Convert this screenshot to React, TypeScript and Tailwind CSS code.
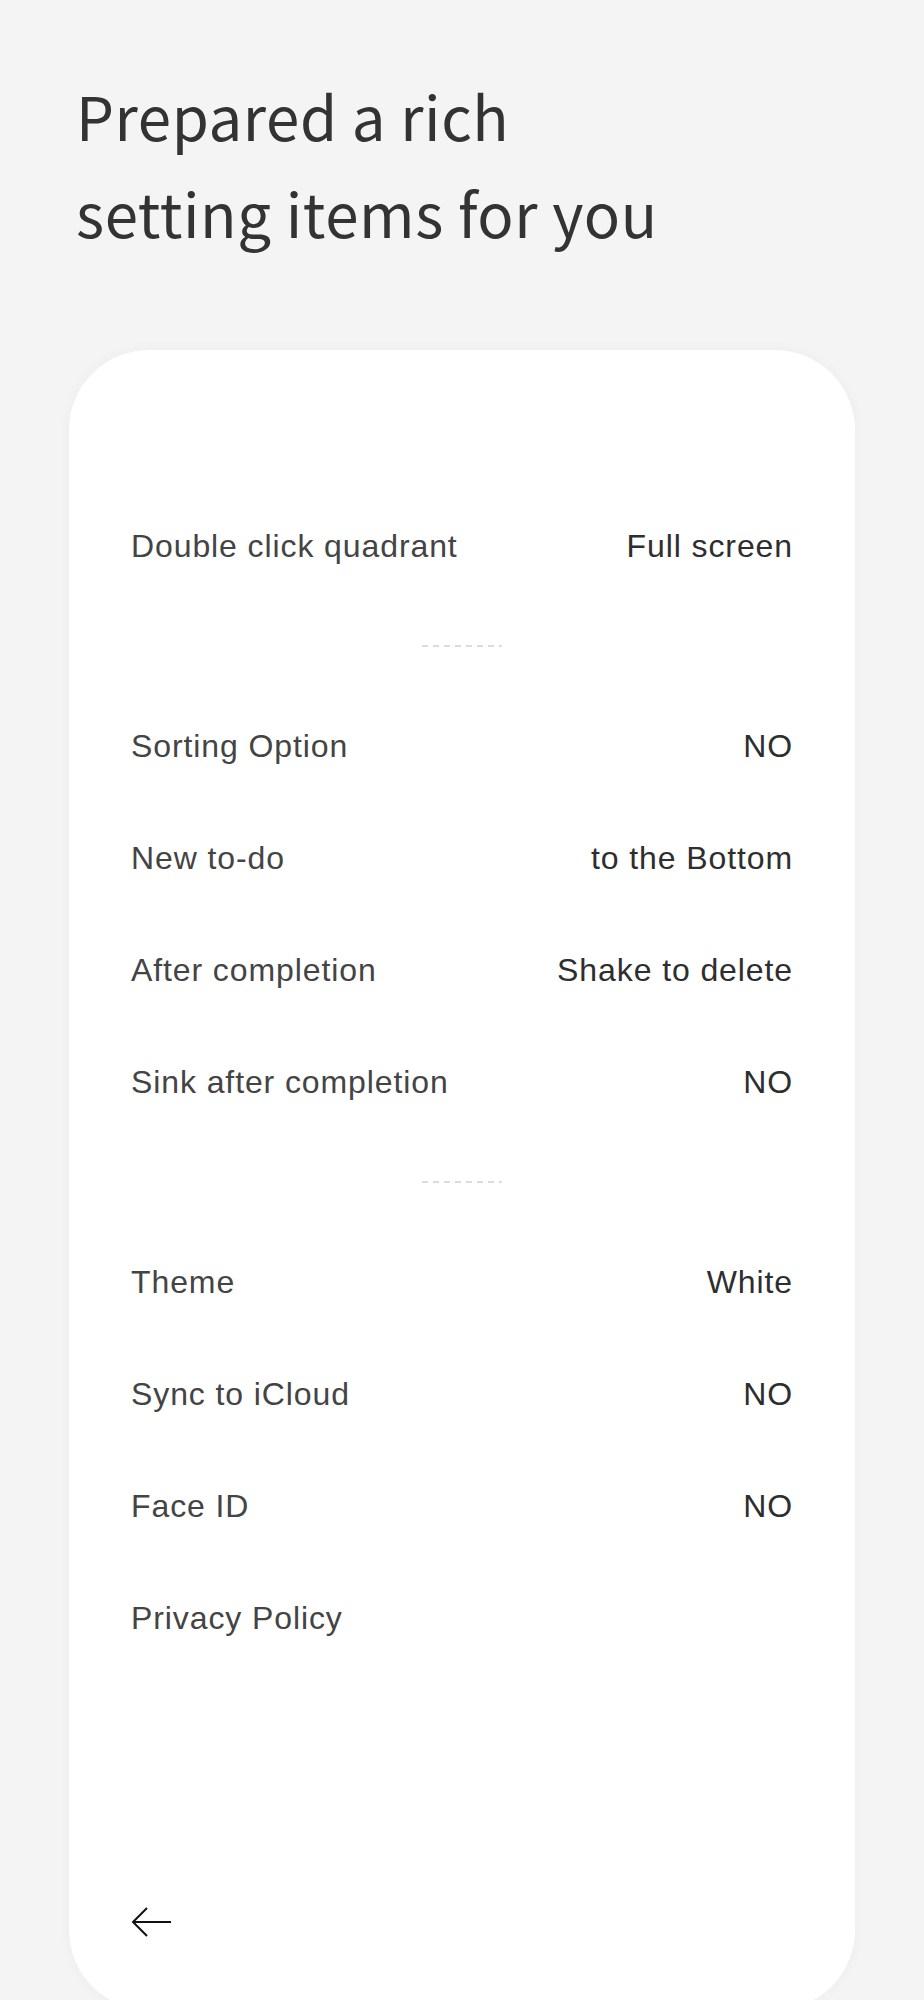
import type React from "react";

type Row = { label: string; value?: string };

const groups: Row[][] = [
	[{ label: "Double click quadrant", value: "Full screen" }],
	[
		{ label: "Sorting Option", value: "NO" },
		{ label: "New to-do", value: "to the Bottom" },
		{ label: "After completion", value: "Shake to delete" },
		{ label: "Sink after completion", value: "NO" },
	],
	[
		{ label: "Theme", value: "White" },
		{ label: "Sync to iCloud", value: "NO" },
		{ label: "Face ID", value: "NO" },
		{ label: "Privacy Policy" },
	],
];

const Divider: React.FC = () => (
	<div className="h-[88px] flex items-center justify-center gap-[5px]">
		{[0, 1, 2, 3, 4, 5, 6].map((i) => (
			<span key={i} className="w-[6px] h-[2px] bg-[#dcdcdc]" />
		))}
		<span className="w-[3px] h-[2px] bg-[#dcdcdc]" />
	</div>
);

const SettingRow: React.FC<{ row: Row }> = ({ row }) => (
	<div className="h-[112px] flex items-center justify-between">
		<span className="text-[32px] text-[#444444] tracking-[0.9px]">
			{row.label}
		</span>
		{row.value && (
			<span className="text-[32px] text-[#2e2e2e] tracking-[0.9px]">
				{row.value}
			</span>
		)}
	</div>
);

export default function App() {
	return (
		<div className="min-h-screen bg-[#f4f4f4] font-['Liberation_Sans',Arial,sans-serif] overflow-hidden">
			<div className="h-[2000px] flex flex-col">
				{/* Header */}
				<h1 className="pt-[66px] pl-[76px] font-['Noto_Sans_CJK_SC','Noto_Sans',sans-serif] text-[60px] leading-[97px] tracking-[0.6px] text-[#333333] font-normal">
					Prepared a rich
					<br />
					setting items for you
				</h1>

				{/* Settings card */}
				<div className="mt-[90px] mx-[69px] h-[1660px] shrink-0 bg-white rounded-[80px] shadow-[0_0_14px_rgba(0,0,0,0.035)] px-[62px] pt-[140px]">
					{groups.map((group, gi) => (
						<div key={gi}>
							{gi > 0 && <Divider />}
							{group.map((row) => (
								<SettingRow key={row.label} row={row} />
							))}
						</div>
					))}

					<button className="mt-[232px] block">
						<svg width="40" height="32" viewBox="0 0 40 32" fill="none">
							<path
								d="M40 16H3M16 2L2 16l14 14"
								stroke="#111"
								strokeWidth="2"
							/>
						</svg>
					</button>
				</div>
			</div>
		</div>
	);
}
